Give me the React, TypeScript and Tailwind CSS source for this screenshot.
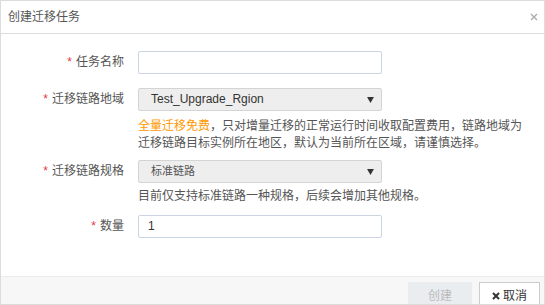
import React from "react";

const font = {
  fontFamily: '"Liberation Sans", "Noto Sans CJK SC", sans-serif',
};

function Label({ text }: { text: string }) {
  return (
    <div className="w-[123px] shrink-0 text-right text-[12px] text-[#555] leading-[23px]">
      <span className="text-[#e4393c] mr-[4px]">*</span>
      {text}
    </div>
  );
}

function Caret() {
  return (
    <svg width="7" height="6" viewBox="0 0 8 7" className="absolute right-[7px] top-[8px]">
      <path d="M0 0 H8 L4 7 Z" fill="#333" />
    </svg>
  );
}

export default function App() {
  return (
    <div
      style={font}
      className="w-[545px] h-[305px] border border-[#dcdcdc] bg-white flex flex-col overflow-hidden"
    >
      <div className="h-[33px] shrink-0 border-b border-[#dcdcdc] flex items-center justify-between pl-[7px] pr-[6px]">
        <span className="text-[12px] text-[#555]">创建迁移任务</span>
        <svg width="8" height="8" viewBox="0 0 8 8">
          <path d="M1 1 L7 7 M7 1 L1 7" stroke="#aaa" strokeWidth="1.3" />
        </svg>
      </div>

      <div className="flex-1 pt-[17px]">
        <div className="flex items-start">
          <Label text="任务名称" />
          <div className="ml-[14px] w-[244px] h-[23px] border border-[#c9d5e2] rounded-[2px] bg-white" />
        </div>

        <div className="flex items-start mt-[14px]">
          <Label text="迁移链路地域" />
          <div className="ml-[14px]">
            <div className="relative w-[244px] h-[23px] border border-[#d4d4d4] rounded-[2px] bg-[#eeeeee] text-[12px] text-[#333] leading-[21px] pl-[12px]">
              Test_Upgrade_Rgion
              <Caret />
            </div>
            <p className="w-[390px] mt-[7px] text-[12px] leading-[17px] text-[#555]">
              <span className="text-[#ff9900]">全量迁移免费</span>，只对增量迁移的正常运行时间收取配置费用，链路地域为迁移链路目标实例所在地区，默认为当前所在区域，请谨慎选择。
            </p>
          </div>
        </div>

        <div className="flex items-start mt-[8px]">
          <Label text="迁移链路规格" />
          <div className="ml-[14px]">
            <div className="relative w-[244px] h-[23px] border border-[#d4d4d4] rounded-[2px] bg-[#eeeeee] text-[11px] text-[#555] leading-[21px] pl-[12px]">
              标准链路
              <Caret />
            </div>
            <p className="mt-[5px] text-[12px] leading-[17px] text-[#555]">
              目前仅支持标准链路一种规格，后续会增加其他规格。
            </p>
          </div>
        </div>

        <div className="flex items-start mt-[10px]">
          <Label text="数量" />
          <div className="ml-[14px] w-[244px] h-[23px] border border-[#c9d5e2] rounded-[2px] bg-white text-[12px] text-[#333] leading-[21px] pl-[9px]">
            1
          </div>
        </div>
      </div>

      <div className="h-[28px] shrink-0 bg-[#f7f7f7] border-t border-[#ececec] flex justify-end items-start gap-[7px] pt-[5px] pr-[4px]">
        <div className="w-[64px] h-[28px] bg-[#e9edf0] text-[#bbb] text-[12px] flex items-center justify-center">
          创建
        </div>
        <div className="w-[61px] h-[28px] bg-white border border-[#ccc] text-[#333] text-[12px] flex items-center justify-center gap-[3px]">
          <svg width="8" height="8" viewBox="0 0 8 8">
            <path d="M1 1 L7 7 M7 1 L1 7" stroke="#333" strokeWidth="2" />
          </svg>
          取消
        </div>
      </div>
    </div>
  );
}
